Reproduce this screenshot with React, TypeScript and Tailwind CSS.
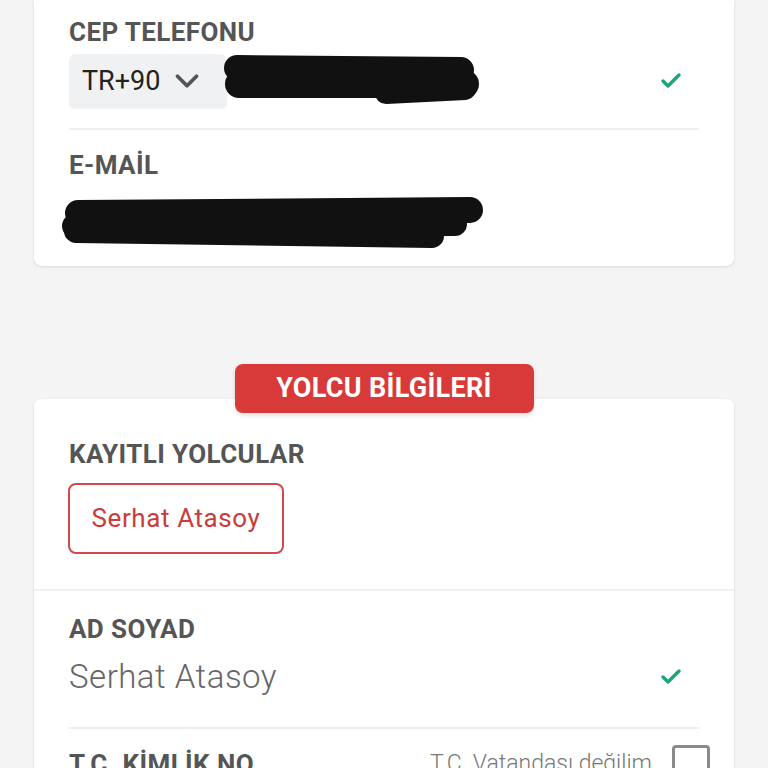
import { ChevronDown, Check } from 'lucide-react'

const font = { fontFamily: 'Roboto, "Noto Sans", sans-serif' }

// Hand-drawn marker strokes that hide personal data
function Scribble({ width, height, strokes }: { width: number; height: number; strokes: { d: string; w: number }[] }) {
  return (
    <svg width={width} height={height} viewBox={`0 0 ${width} ${height}`} className="block shrink-0">
      {strokes.map((s, i) => (
        <path key={i} d={s.d} stroke="#111" strokeWidth={s.w} strokeLinecap="round" strokeLinejoin="round" fill="none" />
      ))}
    </svg>
  )
}

function Label({ children }: { children: React.ReactNode }) {
  return <div className="text-[26px] font-bold leading-[30px] tracking-[0.4px] text-[#555]">{children}</div>
}

function Tick() {
  return <Check className="h-[24px] w-[24px] text-[#1fa57b]" strokeWidth={3.5} />
}

export default function App() {
  return (
    <div className="min-h-screen bg-[#f4f4f5] px-[34px] pb-10" style={font}>
      {/* contact card */}
      <div className="rounded-b-[8px] bg-white px-[35px] pt-[17px] pb-[16px] shadow-[0_1px_3px_rgba(0,0,0,0.12)]">
        <Label>CEP TELEFONU</Label>
        <div className="mt-[6px] flex h-[56px] items-center">
          <div className="flex h-[55px] w-[158px] shrink-0 items-center gap-[8px] rounded-[6px] bg-[#f0f1f3] pl-[13px]">
            <span className="text-[27px] leading-none text-[#222]">TR+90</span>
            <ChevronDown className="h-[38px] w-[38px] text-[#555]" strokeWidth={2.4} />
          </div>
          <div className="-ml-[6px]">
            <Scribble
              width={262}
              height={56}
              strokes={[
                { d: 'M16 15 L240 17', w: 26 },
                { d: 'M18 31 L244 31', w: 28 },
                { d: 'M165 40 L244 36', w: 22 },
              ]}
            />
          </div>
          <div className="ml-auto mr-[16px]">
            <Tick />
          </div>
        </div>
        <div className="mt-[19px] h-[2px] bg-[#efefef]" />
        <div className="mt-[20px]">
          <Label>E-MAİL</Label>
        </div>
        <div className="-ml-[9px] mt-[16px]">
          <Scribble
            width={430}
            height={54}
            strokes={[
              { d: 'M18 17 L410 14', w: 26 },
              { d: 'M14 30 L395 28', w: 24 },
              { d: 'M16 35 L372 40', w: 24 },
            ]}
          />
        </div>
      </div>

      {/* passenger section */}
      <div className="mt-[98px] flex justify-center">
        <div className="relative z-10 -mb-[14px] flex h-[49px] w-[299px] items-center justify-center rounded-[8px] bg-[#d83a3a] shadow-[0_2px_4px_rgba(0,0,0,0.15)]">
          <span className="text-[27px] font-bold tracking-[0.3px] text-white">YOLCU BİLGİLERİ</span>
        </div>
      </div>
      <div className="rounded-t-[8px] bg-white shadow-[0_1px_3px_rgba(0,0,0,0.12)]">
        <div className="px-[35px] pt-[40px] pb-[35px]">
          <Label>KAYITLI YOLCULAR</Label>
          <button className="-ml-px mt-[14px] flex h-[71px] w-[216px] items-center justify-center rounded-[8px] border-2 border-[#cf4a4a] text-[26px] tracking-[0.6px] text-[#c93c3c]">
            Serhat Atasoy
          </button>
        </div>
        <div className="h-[2px] bg-[#efefef]" />
        <div className="px-[35px] pt-[23px]">
          <Label>AD SOYAD</Label>
          <div className="mt-[10px] flex h-[46px] items-center">
            <span className="text-[33px] font-light tracking-[0.5px] text-[#666]">Serhat Atasoy</span>
            <div className="ml-auto mr-[16px]">
              <Tick />
            </div>
          </div>
          <div className="mt-[27px] h-[2px] bg-[#efefef]" />
          <div className="mt-[16px] flex items-center">
            <Label>T.C. KİMLİK NO</Label>
            <span className="ml-auto text-[23px] font-light text-[#777]">T.C. Vatandaşı değilim</span>
            <div className="-mr-[11px] ml-[20px] h-[38px] w-[38px] rounded-[4px] border-[3px] border-[#8a8a8a]" />
          </div>
          <div className="h-[60px]" />
        </div>
      </div>
    </div>
  )
}
